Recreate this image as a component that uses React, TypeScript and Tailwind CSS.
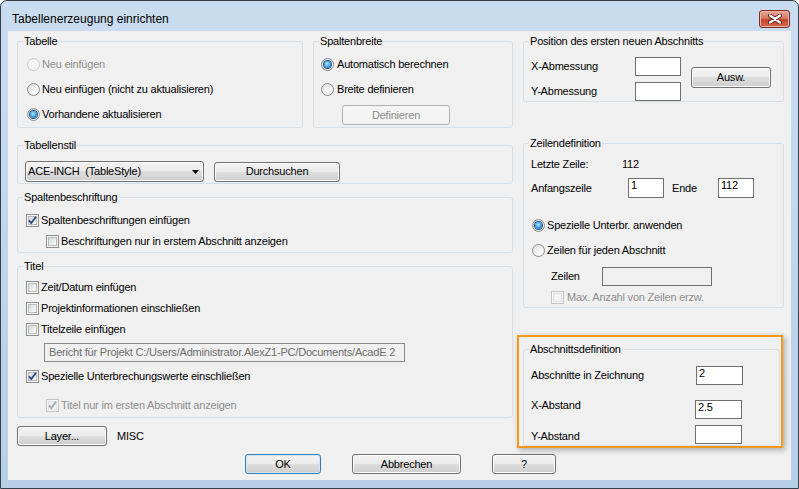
import type { ReactNode } from "react";

const BTN_BG =
  "bg-[linear-gradient(to_bottom,#f2f2f2_0%,#ebebeb_50%,#dddddd_50%,#cfcfcf_100%)]";

function Radio({ checked = false, disabled = false }: { checked?: boolean; disabled?: boolean }) {
  return (
    <span
      className={`w-[13px] h-[13px] shrink-0 rounded-full border flex items-center justify-center ${
        disabled
          ? "border-[#c9c9c9] bg-[#f4f4f4]"
          : "border-[#8e8f8f] bg-[radial-gradient(circle_at_65%_65%,#fbfbfb_0%,#ececec_55%,#d0d0d0_100%)]"
      }`}
    >
      {checked && (
        <span className="w-[7px] h-[7px] rounded-full bg-[radial-gradient(circle_at_45%_40%,#bdeeff_0%,#4aa7e6_45%,#15589c_100%)] shadow-[0_0_0_1px_#1e4f82]" />
      )}
    </span>
  );
}

function Check({ checked = false, disabled = false }: { checked?: boolean; disabled?: boolean }) {
  return (
    <span
      className={`relative w-[13px] h-[13px] shrink-0 border p-[1px] ${
        disabled ? "border-[#c4c4c4] bg-[#f6f6f6]" : "border-[#8e8f8f] bg-[#f4f4f4]"
      }`}
    >
      <span
        className={`block w-full h-full border ${
          disabled
            ? "border-[#e0e0e0] bg-[#f2f2f2]"
            : "border-[#b8bbbe] bg-[linear-gradient(135deg,#d9d9d9,#fbfbfb)]"
        }`}
      />
      {checked && (
        <svg className="absolute left-0 top-0" width="11" height="11" viewBox="0 0 11 11">
          <path
            d="M2 5.3 L4.3 8 L9 1.8"
            fill="none"
            stroke={disabled ? "#a3a9b0" : "#2f4a8a"}
            strokeWidth="1.9"
          />
        </svg>
      )}
    </span>
  );
}

function Btn({
  children,
  className = "",
  disabled = false,
  primary = false,
}: {
  children: ReactNode;
  className?: string;
  disabled?: boolean;
  primary?: boolean;
}) {
  const look = disabled
    ? "border-[#adb2b5] bg-[#f4f4f4] text-[#8a8a8a]"
    : primary
      ? `border-[#3c7fb1] ${BTN_BG} shadow-[inset_0_0_0_1px_#c9e6f8]`
      : `border-[#707070] ${BTN_BG} shadow-[inset_0_0_0_1px_#fcfcfc]`;
  return (
    <button
      type="button"
      className={`flex items-center justify-center rounded-[3px] border shrink-0 ${look} ${className}`}
    >
      {children}
    </button>
  );
}

function Field({
  value = "",
  className = "",
  disabled = false,
}: {
  value?: string;
  className?: string;
  disabled?: boolean;
}) {
  return (
    <div
      className={`border border-[#6f6f6f] shrink-0 pl-[2px] leading-[13px] whitespace-nowrap overflow-hidden ${
        disabled ? "bg-[#f0f0f0]" : "bg-white"
      } ${className}`}
    >
      {value}
    </div>
  );
}

function Group({
  label,
  className = "",
  children,
}: {
  label: string;
  className?: string;
  children?: ReactNode;
}) {
  return (
    <fieldset className={`border border-[#d5dfe5] rounded-[3px] min-w-0 shrink-0 ${className}`}>
      <legend className="ml-[5px] px-[1px] leading-[14px] h-[14px]">{label}</legend>
      {children}
    </fieldset>
  );
}

function RadioRow({
  label,
  checked,
  disabled,
  className = "",
}: {
  label: string;
  checked?: boolean;
  disabled?: boolean;
  className?: string;
}) {
  return (
    <div className={`flex items-center h-[25px] gap-[2px] ${className}`}>
      <Radio checked={checked} disabled={disabled} />
      <span className={disabled ? "text-[#8d8d8d]" : ""}>{label}</span>
    </div>
  );
}

function CheckRow({
  label,
  checked,
  disabled,
  className = "",
}: {
  label: string;
  checked?: boolean;
  disabled?: boolean;
  className?: string;
}) {
  return (
    <div className={`flex items-center h-[21px] gap-[2px] ${className}`}>
      <Check checked={checked} disabled={disabled} />
      <span className={disabled ? "text-[#8d8d8d]" : ""}>{label}</span>
    </div>
  );
}

export default function App() {
  return (
    <div className="w-[799px] h-[489px] bg-white font-['Liberation_Sans',Arial,sans-serif] text-black">
      <div className="w-full h-full rounded-t-[7px] border border-[#34414d] bg-[linear-gradient(to_bottom,#cadcf0,#b8cfe8)] flex flex-col">
        {/* title bar */}
        <div className="h-[30px] flex justify-between shrink-0">
          <div className="pl-[11px] pt-[10px] text-[12px] leading-[16px]">Tabellenerzeugung einrichten</div>
          <div className="mt-[9px] mr-[8px] w-[31px] h-[18px] rounded-[3px] border border-[#7a2f25] bg-[linear-gradient(to_bottom,#e9a99b_0%,#d47866_45%,#c2442c_55%,#d5684f_100%)] shadow-[inset_0_0_0_1px_#eab3a6] flex items-center justify-center">
            <svg width="14" height="10" viewBox="0 0 14 10">
              <path d="M2 1.5 L12 8.5 M12 1.5 L2 8.5" stroke="#5a1d14" strokeWidth="4" strokeLinecap="round" />
              <path d="M2 1.5 L12 8.5 M12 1.5 L2 8.5" stroke="#ffffff" strokeWidth="2.2" strokeLinecap="round" />
            </svg>
          </div>
        </div>

        {/* client area */}
        <div className="relative mx-[7px] h-[449px] bg-[#f0f0f0] text-[11px] tracking-[-0.2px] pt-[3px]">
          <div className="flex pl-[9px] gap-[10px]">
            {/* left column */}
            <div className="w-[496px] flex flex-col">
              <div className="flex gap-[10px]">
                <Group label="Tabelle" className="w-[286px] h-[94px]">
                  <div className="pt-[4px] pl-[9px]">
                    <RadioRow label="Neu einfügen" disabled />
                    <RadioRow label="Neu einfügen (nicht zu aktualisieren)" />
                    <RadioRow label="Vorhandene aktualisieren" checked />
                  </div>
                </Group>
                <Group label="Spaltenbreite" className="w-[200px] h-[94px]">
                  <div className="pt-[4px] pl-[7px]">
                    <RadioRow label="Automatisch berechnen" checked className="gap-[3px]" />
                    <RadioRow label="Breite definieren" className="gap-[3px]" />
                    <Btn disabled className="mt-[3px] ml-[21px] w-[108px] h-[20px]">
                      Definieren
                    </Btn>
                  </div>
                </Group>
              </div>

              <Group label="Tabellenstil" className="mt-[10px] h-[46px]">
                <div className="flex items-center pt-[9px] pl-[7px] gap-[10px]">
                  <div
                    className={`w-[179px] h-[21px] rounded-[3px] border border-[#707070] ${BTN_BG} shadow-[inset_0_0_0_1px_#fcfcfc] flex items-center pl-[2px] pr-[4px] whitespace-pre`}
                  >
                    <span className="flex-1">ACE-INCH  (TableStyle)</span>
                    <svg width="7" height="4" viewBox="0 0 7 4">
                      <path d="M0 0 H7 L3.5 4 Z" fill="#000" />
                    </svg>
                  </div>
                  <Btn className="w-[126px] h-[20px]">Durchsuchen</Btn>
                </div>
              </Group>

              <Group label="Spaltenbeschriftung" className="mt-[6px] h-[63px]">
                <div className="pt-[6px] pl-[8px]">
                  <CheckRow label="Spaltenbeschriftungen einfügen" checked />
                  <CheckRow label="Beschriftungen nur in erstem Abschnitt anzeigen" className="pl-[20px]" />
                </div>
              </Group>

              <Group label="Titel" className="mt-[6px] h-[159px]">
                <div className="pt-[4px]">
                  <CheckRow label="Zeit/Datum einfügen" className="pl-[8px]" />
                  <CheckRow label="Projektinformationen einschließen" className="pl-[8px]" />
                  <CheckRow label="Titelzeile einfügen" className="pl-[8px]" />
                  <div className="mt-[3px] ml-[26px] w-[361px] h-[19px] border border-[#8a8a8a] bg-[#f0f0f0] text-[#6d6d6d] flex items-center pl-[4px] whitespace-nowrap">
                    Bericht für Projekt C:/Users/Administrator.AlexZ1-PC/Documents/AcadE 2
                  </div>
                  <CheckRow label="Spezielle Unterbrechungswerte einschließen" checked className="mt-[4px] pl-[8px]" />
                  <CheckRow label="Titel nur im ersten Abschnitt anzeigen" checked disabled className="mt-[8px] pl-[28px]" />
                </div>
              </Group>

              <div className="mt-[8px] flex items-center h-[20px]">
                <Btn className="w-[90px] h-[20px]">Layer...</Btn>
                <span className="ml-[10px]">MISC</span>
              </div>
            </div>

            {/* right column */}
            <div className="w-[261px] flex flex-col">
              <Group label="Position des ersten neuen Abschnitts" className="h-[68px]">
                <div className="flex pl-[7px] pt-[9px]">
                  <div className="flex flex-col gap-[6px]">
                    <div className="flex items-center h-[19px]">
                      <span className="w-[104px]">X-Abmessung</span>
                      <Field className="w-[46px] h-[19px]" />
                    </div>
                    <div className="flex items-center h-[19px]">
                      <span className="w-[104px]">Y-Abmessung</span>
                      <Field className="w-[46px] h-[19px]" />
                    </div>
                  </div>
                  <Btn className="ml-[10px] mt-[10px] w-[80px] h-[21px]">Ausw.</Btn>
                </div>
              </Group>

              <Group label="Zeilendefinition" className="mt-[34px] h-[172px]">
                <div className="pl-[7px] pt-[4px]">
                  <div className="flex items-center h-[20px]">
                    <span className="w-[91px]">Letzte Zeile:</span>
                    <span>112</span>
                  </div>
                  <div className="flex items-center h-[20px] mt-[4px]">
                    <span className="w-[97px]">Anfangszeile</span>
                    <Field value="1" className="w-[36px] h-[20px]" />
                    <span className="ml-[8px] w-[46px]">Ende</span>
                    <Field value="112" className="w-[36px] h-[20px]" />
                  </div>
                  <div className="mt-[15px] pl-[1px]">
                    <RadioRow label="Spezielle Unterbr. anwenden" checked />
                    <RadioRow label="Zeilen für jeden Abschnitt" />
                  </div>
                  <div className="flex items-center h-[19px] mt-[4px] pl-[20px]">
                    <span className="w-[51px]">Zeilen</span>
                    <Field disabled className="w-[110px] h-[19px]" />
                  </div>
                  <div className="flex items-center h-[18px] mt-[2px] pl-[20px] gap-[3px]">
                    <Check disabled />
                    <span className="text-[#8d8d8d]">Max. Anzahl von Zeilen erzw.</span>
                  </div>
                </div>
              </Group>

              <Group label="Abschnittsdefinition" className="mt-[34px] h-[104px] w-[257px]">
                <div className="pl-[7px] pt-[10px]">
                  <div className="flex items-center h-[19px]">
                    <span className="w-[165px]">Abschnitte in Zeichnung</span>
                    <Field value="2" className="w-[47px] h-[19px]" />
                  </div>
                  <div className="flex items-center h-[19px] mt-[15px]">
                    <span className="w-[164px] mb-[9px]">X-Abstand</span>
                    <Field value="2.5" className="w-[47px] h-[19px]" />
                  </div>
                  <div className="flex items-center h-[19px] mt-[6px]">
                    <span className="w-[164px] mt-[3px]">Y-Abstand</span>
                    <Field className="w-[47px] h-[19px]" />
                  </div>
                </div>
              </Group>
            </div>
          </div>

          {/* dialog buttons */}
          <div className="flex mt-[8px] pl-[237px] h-[20px]">
            <Btn primary className="w-[76px] h-[20px]">OK</Btn>
            <Btn className="ml-[31px] w-[109px] h-[20px]">Abbrechen</Btn>
            <Btn className="ml-[31px] w-[64px] h-[20px]">?</Btn>
          </div>

          {/* annotation highlight */}
          <div className="absolute left-[509px] top-[304px] w-[266px] h-[113px] border-2 border-[#f7981d] shadow-[2px_2px_6px_rgba(0,0,0,0.3)] pointer-events-none" />
        </div>
      </div>
    </div>
  );
}
